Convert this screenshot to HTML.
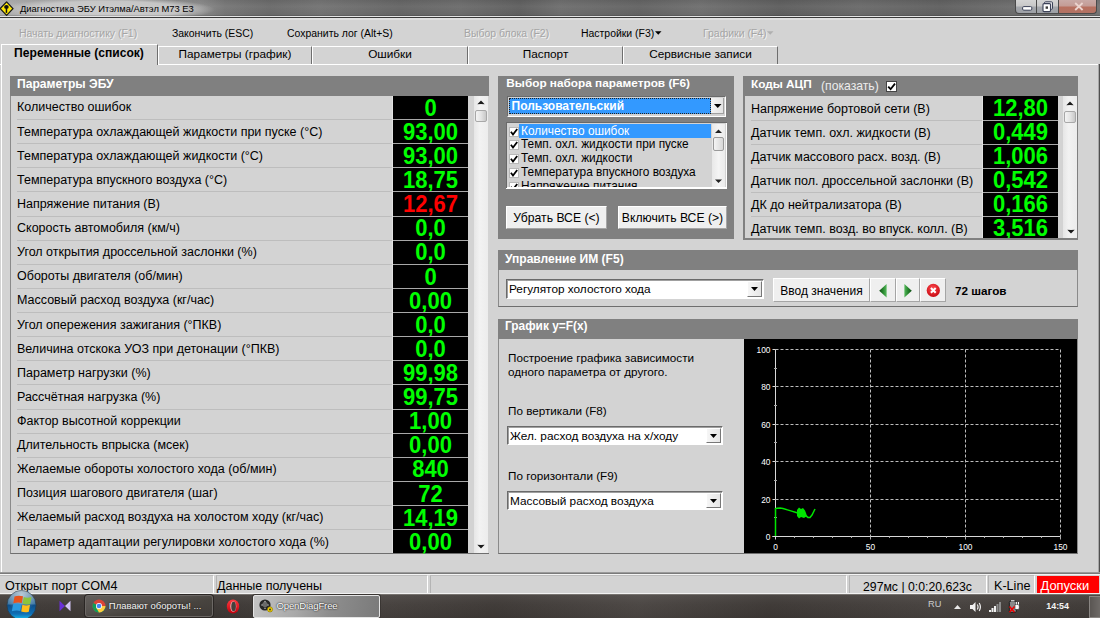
<!DOCTYPE html>
<html><head><meta charset="utf-8">
<style>
*{margin:0;padding:0;box-sizing:border-box}
html,body{width:1100px;height:618px;overflow:hidden;background:#d3d3d3;font-family:"Liberation Sans",sans-serif;color:#000;position:relative}
.a{position:absolute}
.t{position:absolute;white-space:nowrap;line-height:1}
</style></head><body>
<div class="a" style="left:0px;top:0px;width:1100px;height:16px;background:linear-gradient(90deg,#b0b0b0 0px,#8a8a8a 200px,#767676 225px,#6a6a6a 270px,#737373 320px,#656565 400px,#6c6c6c 460px,#5f5f5f 520px,#6e6e6e 560px,#636363 640px,#6f6f6f 700px,#5e5e5e 780px,#6a6a6a 860px,#606060 940px,#6c6c6c 1010px,#747474 1100px)"></div>
<div class="a" style="left:0px;top:0px;width:1100px;height:16px;background:linear-gradient(180deg,rgba(0,0,0,.05),rgba(255,255,255,.04) 40%,rgba(0,0,0,.03))"></div>
<div class="a" style="left:0px;top:0px;width:215px;height:16px;background:radial-gradient(ellipse 50% 75% at 50% 60%,rgba(205,205,205,1) 0%,rgba(200,200,200,.95) 70%,rgba(190,190,190,0) 100%)"></div>
<div class="a" style="left:0px;top:15px;width:1100px;height:1px;background:rgba(0,0,0,.12)"></div>
<div class="a" style="left:0px;top:16px;width:1100px;height:1px;background:#e4e4e4"></div>
<div class="a" style="left:0px;top:17px;width:1100px;height:1px;background:#3a3a3a"></div>
<div class="a" style="left:0px;top:18px;width:1100px;height:2px;background:#e0e0e0"></div>
<svg class="a" style="left:0px;top:1px" width="15" height="16" viewBox="0 0 15 16"><path d="M6.6 0.9 L13 7.6 L6.6 14.4 L0.2 7.6 Z" fill="#ffe800" stroke="#1a1a1a" stroke-width="1.3" stroke-linejoin="round"/><ellipse cx="6.4" cy="5.9" rx="2.3" ry="1.9" fill="#111"/><rect x="5.7" y="6.5" width="1.5" height="5.4" fill="#111"/></svg>
<div class="t" style="left:20px;top:3.84px;font-size:9.4px;color:#000;">Диагностика ЭБУ Итэлма/Автэл М73 Е3</div>
<div class="a" style="left:1015px;top:0;width:22px;height:14px;border:1px solid #4a4a4a;border-top:none;border-radius:0 0 0 4px;background:linear-gradient(#d4d4d4,#c8c8c8 45%,#a4a7ac 55%,#9da0a6)"></div>
<div class="a" style="left:1037px;top:0;width:22px;height:14px;border:1px solid #4a4a4a;border-top:none;border-left:none;background:linear-gradient(#d4d4d4,#c8c8c8 45%,#a4a7ac 55%,#9da0a6)"></div>
<div class="a" style="left:1059px;top:0;width:38px;height:14px;border:1px solid #4a4a4a;border-top:none;border-left:none;border-radius:0 0 4px 0;background:linear-gradient(#c9aaa6,#c49c96 45%,#b8705f 55%,#b27264)"></div>
<svg class="a" style="left:1022px;top:6px" width="11" height="5"><rect x="0.6" y="0.6" width="9.2" height="3.6" rx="1.2" fill="#fff" stroke="#3c4258" stroke-width="1"/></svg>
<svg class="a" style="left:1042px;top:1px" width="12" height="12"><rect x="2.5" y="0.8" width="8" height="7.5" rx="1" fill="#dfe0e4" stroke="#3c4258" stroke-width="1"/><rect x="1" y="2.6" width="7.5" height="8" rx="1" fill="#fff" stroke="#3c4258" stroke-width="1.1"/><rect x="3.6" y="5.4" width="2.4" height="2.4" fill="#3a3a3a"/></svg>
<svg class="a" style="left:1074px;top:2px" width="10" height="9"><path d="M1.2 1 L8.6 8 M8.6 1 L1.2 8" stroke="#ecd4ce" stroke-width="1.8"/></svg>
<div class="t" style="left:19px;top:29.15px;font-size:10.45px;color:#a5a5a5;text-shadow:1px 1px 0 #f2f2f2;">Начать диагностику (F1)</div>
<div class="t" style="left:172px;top:29.15px;font-size:10.45px;color:#000;">Закончить (ESC)</div>
<div class="t" style="left:287px;top:29.15px;font-size:10.45px;color:#000;">Сохранить лог (Alt+S)</div>
<div class="t" style="left:464px;top:29.15px;font-size:10.45px;color:#a5a5a5;text-shadow:1px 1px 0 #f2f2f2;">Выбор блока (F2)</div>
<div class="t" style="left:581px;top:29.15px;font-size:10.45px;color:#000;">Настройки (F3)</div>
<div class="t" style="left:703px;top:29.15px;font-size:10.45px;color:#a5a5a5;text-shadow:1px 1px 0 #f2f2f2;">Графики (F4)</div>
<svg class="a" style="left:655px;top:31px" width="7" height="4"><path d="M0 0.3 L6.5 0.3 L3.25 3.8 Z" fill="#000"/></svg>
<svg class="a" style="left:767px;top:31px" width="7" height="4"><path d="M0 0.3 L6.5 0.3 L3.25 3.8 Z" fill="#b0b0b0"/></svg>
<div class="a" style="left:0px;top:64px;width:1100px;height:1px;background:#fff"></div>
<div class="a" style="left:1px;top:44px;width:157px;height:21px;background:#d3d3d3;border-top:1px solid #fff;border-left:1px solid #fff;border-right:1px solid #6e6e6e"></div>
<div class="t" style="left:-121px;width:400px;text-align:center;top:46.66px;font-size:12.1px;font-weight:bold;color:#000;">Переменные (список)</div>
<div class="a" style="left:158px;top:46px;width:154px;height:18px;border-top:1px solid #fff;border-left:1px solid #fff;border-right:1px solid #6e6e6e"></div>
<div class="t" style="left:35.0px;width:400px;text-align:center;top:49.01px;font-size:11.8px;color:#000;">Параметры (график)</div>
<div class="a" style="left:312px;top:46px;width:156px;height:18px;border-top:1px solid #fff;border-left:1px solid #fff;border-right:1px solid #6e6e6e"></div>
<div class="t" style="left:190.0px;width:400px;text-align:center;top:49.01px;font-size:11.8px;color:#000;">Ошибки</div>
<div class="a" style="left:468px;top:46px;width:155px;height:18px;border-top:1px solid #fff;border-left:1px solid #fff;border-right:1px solid #6e6e6e"></div>
<div class="t" style="left:345.5px;width:400px;text-align:center;top:49.01px;font-size:11.8px;color:#000;">Паспорт</div>
<div class="a" style="left:623px;top:46px;width:155px;height:18px;border-top:1px solid #fff;border-left:1px solid #fff;border-right:1px solid #6e6e6e"></div>
<div class="t" style="left:500.5px;width:400px;text-align:center;top:49.01px;font-size:11.8px;color:#000;">Сервисные записи</div>
<div class="a" style="left:10px;top:76px;width:479px;height:478px;background:#d3d3d3;border-left:1px solid #8a8a8a;border-bottom:1px solid #6e6e6e"></div>
<div class="a" style="left:10px;top:76px;width:479px;height:20px;background:#808080"></div>
<div class="t" style="left:17px;top:78.16px;font-size:12.1px;font-weight:bold;color:#fff;">Параметры ЭБУ</div>
<div class="t" style="left:17px;top:101.42px;font-size:12.5px;color:#000;">Количество ошибок</div>
<div class="a" style="left:393px;top:96px;width:75px;height:23px;background:#000"></div>
<div class="t" style="left:230.5px;width:400px;text-align:center;top:96.69px;font-size:22px;font-weight:bold;color:#00ff00;transform:scaleY(1.08);transform-origin:0 0">0</div>
<div class="a" style="left:17px;top:119px;width:376px;height:1px;background:#bdbdbd"></div>
<div class="a" style="left:393px;top:119px;width:75px;height:1px;background:#a8a8a8"></div>
<div class="t" style="left:17px;top:125.54px;font-size:12.5px;color:#000;">Температура охлаждающей жидкости при пуске (°C)</div>
<div class="a" style="left:393px;top:120px;width:75px;height:23px;background:#000"></div>
<div class="t" style="left:230.5px;width:400px;text-align:center;top:120.81px;font-size:22px;font-weight:bold;color:#00ff00;transform:scaleY(1.08);transform-origin:0 0">93,00</div>
<div class="a" style="left:17px;top:143px;width:376px;height:1px;background:#bdbdbd"></div>
<div class="a" style="left:393px;top:143px;width:75px;height:1px;background:#a8a8a8"></div>
<div class="t" style="left:17px;top:149.66px;font-size:12.5px;color:#000;">Температура охлаждающей жидкости (°C)</div>
<div class="a" style="left:393px;top:144px;width:75px;height:23px;background:#000"></div>
<div class="t" style="left:230.5px;width:400px;text-align:center;top:144.93px;font-size:22px;font-weight:bold;color:#00ff00;transform:scaleY(1.08);transform-origin:0 0">93,00</div>
<div class="a" style="left:17px;top:167px;width:376px;height:1px;background:#bdbdbd"></div>
<div class="a" style="left:393px;top:167px;width:75px;height:1px;background:#a8a8a8"></div>
<div class="t" style="left:17px;top:173.78px;font-size:12.5px;color:#000;">Температура впускного воздуха (°C)</div>
<div class="a" style="left:393px;top:168px;width:75px;height:23px;background:#000"></div>
<div class="t" style="left:230.5px;width:400px;text-align:center;top:169.05px;font-size:22px;font-weight:bold;color:#00ff00;transform:scaleY(1.08);transform-origin:0 0">18,75</div>
<div class="a" style="left:17px;top:191px;width:376px;height:1px;background:#bdbdbd"></div>
<div class="a" style="left:393px;top:191px;width:75px;height:1px;background:#a8a8a8"></div>
<div class="t" style="left:17px;top:197.90px;font-size:12.5px;color:#000;">Напряжение питания (В)</div>
<div class="a" style="left:393px;top:192px;width:75px;height:24px;background:#000"></div>
<div class="t" style="left:230.5px;width:400px;text-align:center;top:193.17px;font-size:22px;font-weight:bold;color:#ff0000;transform:scaleY(1.08);transform-origin:0 0">12,67</div>
<div class="a" style="left:17px;top:216px;width:376px;height:1px;background:#bdbdbd"></div>
<div class="a" style="left:393px;top:216px;width:75px;height:1px;background:#a8a8a8"></div>
<div class="t" style="left:17px;top:222.02px;font-size:12.5px;color:#000;">Скорость автомобиля (км/ч)</div>
<div class="a" style="left:393px;top:217px;width:75px;height:23px;background:#000"></div>
<div class="t" style="left:230.5px;width:400px;text-align:center;top:217.29px;font-size:22px;font-weight:bold;color:#00ff00;transform:scaleY(1.08);transform-origin:0 0">0,0</div>
<div class="a" style="left:17px;top:240px;width:376px;height:1px;background:#bdbdbd"></div>
<div class="a" style="left:393px;top:240px;width:75px;height:1px;background:#a8a8a8"></div>
<div class="t" style="left:17px;top:246.14px;font-size:12.5px;color:#000;">Угол открытия дроссельной заслонки (%)</div>
<div class="a" style="left:393px;top:241px;width:75px;height:23px;background:#000"></div>
<div class="t" style="left:230.5px;width:400px;text-align:center;top:241.41px;font-size:22px;font-weight:bold;color:#00ff00;transform:scaleY(1.08);transform-origin:0 0">0,0</div>
<div class="a" style="left:17px;top:264px;width:376px;height:1px;background:#bdbdbd"></div>
<div class="a" style="left:393px;top:264px;width:75px;height:1px;background:#a8a8a8"></div>
<div class="t" style="left:17px;top:270.26px;font-size:12.5px;color:#000;">Обороты двигателя (об/мин)</div>
<div class="a" style="left:393px;top:265px;width:75px;height:23px;background:#000"></div>
<div class="t" style="left:230.5px;width:400px;text-align:center;top:265.53px;font-size:22px;font-weight:bold;color:#00ff00;transform:scaleY(1.08);transform-origin:0 0">0</div>
<div class="a" style="left:17px;top:288px;width:376px;height:1px;background:#bdbdbd"></div>
<div class="a" style="left:393px;top:288px;width:75px;height:1px;background:#a8a8a8"></div>
<div class="t" style="left:17px;top:294.38px;font-size:12.5px;color:#000;">Массовый расход воздуха (кг/час)</div>
<div class="a" style="left:393px;top:289px;width:75px;height:23px;background:#000"></div>
<div class="t" style="left:230.5px;width:400px;text-align:center;top:289.65px;font-size:22px;font-weight:bold;color:#00ff00;transform:scaleY(1.08);transform-origin:0 0">0,00</div>
<div class="a" style="left:17px;top:312px;width:376px;height:1px;background:#bdbdbd"></div>
<div class="a" style="left:393px;top:312px;width:75px;height:1px;background:#a8a8a8"></div>
<div class="t" style="left:17px;top:318.50px;font-size:12.5px;color:#000;">Угол опережения зажигания (°ПКВ)</div>
<div class="a" style="left:393px;top:313px;width:75px;height:23px;background:#000"></div>
<div class="t" style="left:230.5px;width:400px;text-align:center;top:313.77px;font-size:22px;font-weight:bold;color:#00ff00;transform:scaleY(1.08);transform-origin:0 0">0,0</div>
<div class="a" style="left:17px;top:336px;width:376px;height:1px;background:#bdbdbd"></div>
<div class="a" style="left:393px;top:336px;width:75px;height:1px;background:#a8a8a8"></div>
<div class="t" style="left:17px;top:342.62px;font-size:12.5px;color:#000;">Величина отскока УОЗ при детонации (°ПКВ)</div>
<div class="a" style="left:393px;top:337px;width:75px;height:23px;background:#000"></div>
<div class="t" style="left:230.5px;width:400px;text-align:center;top:337.89px;font-size:22px;font-weight:bold;color:#00ff00;transform:scaleY(1.08);transform-origin:0 0">0,0</div>
<div class="a" style="left:17px;top:360px;width:376px;height:1px;background:#bdbdbd"></div>
<div class="a" style="left:393px;top:360px;width:75px;height:1px;background:#a8a8a8"></div>
<div class="t" style="left:17px;top:366.74px;font-size:12.5px;color:#000;">Параметр нагрузки (%)</div>
<div class="a" style="left:393px;top:361px;width:75px;height:23px;background:#000"></div>
<div class="t" style="left:230.5px;width:400px;text-align:center;top:362.01px;font-size:22px;font-weight:bold;color:#00ff00;transform:scaleY(1.08);transform-origin:0 0">99,98</div>
<div class="a" style="left:17px;top:384px;width:376px;height:1px;background:#bdbdbd"></div>
<div class="a" style="left:393px;top:384px;width:75px;height:1px;background:#a8a8a8"></div>
<div class="t" style="left:17px;top:390.86px;font-size:12.5px;color:#000;">Рассчётная нагрузка (%)</div>
<div class="a" style="left:393px;top:385px;width:75px;height:24px;background:#000"></div>
<div class="t" style="left:230.5px;width:400px;text-align:center;top:386.13px;font-size:22px;font-weight:bold;color:#00ff00;transform:scaleY(1.08);transform-origin:0 0">99,75</div>
<div class="a" style="left:17px;top:409px;width:376px;height:1px;background:#bdbdbd"></div>
<div class="a" style="left:393px;top:409px;width:75px;height:1px;background:#a8a8a8"></div>
<div class="t" style="left:17px;top:414.98px;font-size:12.5px;color:#000;">Фактор высотной коррекции</div>
<div class="a" style="left:393px;top:410px;width:75px;height:23px;background:#000"></div>
<div class="t" style="left:230.5px;width:400px;text-align:center;top:410.25px;font-size:22px;font-weight:bold;color:#00ff00;transform:scaleY(1.08);transform-origin:0 0">1,00</div>
<div class="a" style="left:17px;top:433px;width:376px;height:1px;background:#bdbdbd"></div>
<div class="a" style="left:393px;top:433px;width:75px;height:1px;background:#a8a8a8"></div>
<div class="t" style="left:17px;top:439.10px;font-size:12.5px;color:#000;">Длительность впрыска (мсек)</div>
<div class="a" style="left:393px;top:434px;width:75px;height:23px;background:#000"></div>
<div class="t" style="left:230.5px;width:400px;text-align:center;top:434.37px;font-size:22px;font-weight:bold;color:#00ff00;transform:scaleY(1.08);transform-origin:0 0">0,00</div>
<div class="a" style="left:17px;top:457px;width:376px;height:1px;background:#bdbdbd"></div>
<div class="a" style="left:393px;top:457px;width:75px;height:1px;background:#a8a8a8"></div>
<div class="t" style="left:17px;top:463.22px;font-size:12.5px;color:#000;">Желаемые обороты холостого хода (об/мин)</div>
<div class="a" style="left:393px;top:458px;width:75px;height:23px;background:#000"></div>
<div class="t" style="left:230.5px;width:400px;text-align:center;top:458.49px;font-size:22px;font-weight:bold;color:#00ff00;transform:scaleY(1.08);transform-origin:0 0">840</div>
<div class="a" style="left:17px;top:481px;width:376px;height:1px;background:#bdbdbd"></div>
<div class="a" style="left:393px;top:481px;width:75px;height:1px;background:#a8a8a8"></div>
<div class="t" style="left:17px;top:487.34px;font-size:12.5px;color:#000;">Позиция шагового двигателя (шаг)</div>
<div class="a" style="left:393px;top:482px;width:75px;height:23px;background:#000"></div>
<div class="t" style="left:230.5px;width:400px;text-align:center;top:482.61px;font-size:22px;font-weight:bold;color:#00ff00;transform:scaleY(1.08);transform-origin:0 0">72</div>
<div class="a" style="left:17px;top:505px;width:376px;height:1px;background:#bdbdbd"></div>
<div class="a" style="left:393px;top:505px;width:75px;height:1px;background:#a8a8a8"></div>
<div class="t" style="left:17px;top:511.46px;font-size:12.5px;color:#000;">Желаемый расход воздуха на холостом ходу (кг/час)</div>
<div class="a" style="left:393px;top:506px;width:75px;height:23px;background:#000"></div>
<div class="t" style="left:230.5px;width:400px;text-align:center;top:506.73px;font-size:22px;font-weight:bold;color:#00ff00;transform:scaleY(1.08);transform-origin:0 0">14,19</div>
<div class="a" style="left:17px;top:529px;width:376px;height:1px;background:#bdbdbd"></div>
<div class="a" style="left:393px;top:529px;width:75px;height:1px;background:#a8a8a8"></div>
<div class="t" style="left:17px;top:535.58px;font-size:12.5px;color:#000;">Параметр адаптации регулировки холостого хода (%)</div>
<div class="a" style="left:393px;top:530px;width:75px;height:23px;background:#000"></div>
<div class="t" style="left:230.5px;width:400px;text-align:center;top:530.85px;font-size:22px;font-weight:bold;color:#00ff00;transform:scaleY(1.08);transform-origin:0 0">0,00</div>
<div class="a" style="left:392px;top:96px;width:1px;height:457px;background:#e2e2e2"></div>
<div class="a" style="left:474px;top:96px;width:14px;height:457px;background:linear-gradient(90deg,#e6e6e6,#f2f2f2 40%,#ececec)"></div>
<svg class="a" style="left:477px;top:100px" width="8" height="5"><path d="M0.3 4.2 L4 0.6 L7.7 4.2 L4 3.9 Z" fill="#1a1a1a"/></svg>
<div class="a" style="left:475px;top:110px;width:12px;height:12px;background:linear-gradient(90deg,#f4f4f4,#e4e4e4 50%,#c8c8c8);border:1px solid #a8a8a8;border-radius:2px"></div>
<svg class="a" style="left:477px;top:544px" width="8" height="5"><path d="M0.3 0.8 L4 4.4 L7.7 0.8 L4 1.1 Z" fill="#1a1a1a"/></svg>
<div class="a" style="left:498px;top:76px;width:236px;height:163px;background:#808080"></div>
<div class="t" style="left:506.3px;top:78.01px;font-size:11.8px;font-weight:bold;color:#fff;">Выбор набора параметров (F6)</div>
<div class="a" style="left:507px;top:96px;width:219px;height:21px;background:#fff;border-top:1px solid #6a6a6a;border-left:1px solid #6a6a6a;border-bottom:1px solid #fff;border-right:1px solid #fff"></div>
<div class="a" style="left:508px;top:97px;width:217px;height:19px;background:#d3d3d3"></div>
<div class="a" style="left:509px;top:98px;width:202px;height:16px;background:#3399ff;outline:1px dotted #222;outline-offset:-1px"></div>
<div class="t" style="left:511.5px;top:100.34px;font-size:12px;font-weight:bold;color:#fff;">Пользовательский</div>
<div class="a" style="left:711px;top:98px;width:13px;height:16px;background:linear-gradient(90deg,#f4f4f4,#e4e4e4);border-right:1px solid #a0a0a0;border-bottom:1px solid #a0a0a0"></div>
<svg class="a" style="left:714px;top:104px" width="8" height="4"><path d="M0 0 L7.5 0 L3.75 4 Z" fill="#000"/></svg>
<div class="a" style="left:506px;top:122px;width:221px;height:67px;background:#fff;border-top:1px solid #6a6a6a;border-left:1px solid #6a6a6a"></div>
<div class="a" style="left:507px;top:123px;width:219px;height:64px;background:#d3d3d3;overflow:hidden"></div>
<div class="a" style="left:507px;top:123px;width:205px;height:64px;overflow:hidden">
<div class="a" style="left:12px;top:1px;width:192px;height:14px;background:#3399ff"></div>
<div class="a" style="left:2px;top:3.6px;width:10px;height:10px;background:#fff;border:1px solid #b8b8b8"></div>
<svg class="a" style="left:3px;top:4.6px" width="8" height="8"><path d="M0.9 3.8 L3 6.5 L7.2 1" fill="none" stroke="#000" stroke-width="1.8"/></svg>
<div class="t" style="left:14px;top:2.6px;font-size:11.85px;color:#fff">Количество ошибок</div>
<div class="a" style="left:2px;top:17.4px;width:10px;height:10px;background:#fff;border:1px solid #b8b8b8"></div>
<svg class="a" style="left:3px;top:18.4px" width="8" height="8"><path d="M0.9 3.8 L3 6.5 L7.2 1" fill="none" stroke="#000" stroke-width="1.8"/></svg>
<div class="t" style="left:14px;top:16.4px;font-size:11.85px;color:#000">Темп. охл. жидкости при пуске</div>
<div class="a" style="left:2px;top:31.1px;width:10px;height:10px;background:#fff;border:1px solid #b8b8b8"></div>
<svg class="a" style="left:3px;top:32.1px" width="8" height="8"><path d="M0.9 3.8 L3 6.5 L7.2 1" fill="none" stroke="#000" stroke-width="1.8"/></svg>
<div class="t" style="left:14px;top:30.1px;font-size:11.85px;color:#000">Темп. охл. жидкости</div>
<div class="a" style="left:2px;top:44.8px;width:10px;height:10px;background:#fff;border:1px solid #b8b8b8"></div>
<svg class="a" style="left:3px;top:45.8px" width="8" height="8"><path d="M0.9 3.8 L3 6.5 L7.2 1" fill="none" stroke="#000" stroke-width="1.8"/></svg>
<div class="t" style="left:14px;top:43.8px;font-size:11.85px;color:#000">Температура впускного воздуха</div>
<div class="a" style="left:2px;top:58.6px;width:10px;height:10px;background:#fff;border:1px solid #b8b8b8"></div>
<svg class="a" style="left:3px;top:59.6px" width="8" height="8"><path d="M0.9 3.8 L3 6.5 L7.2 1" fill="none" stroke="#000" stroke-width="1.8"/></svg>
<div class="t" style="left:14px;top:57.6px;font-size:11.85px;color:#000">Напряжение питания</div>
</div>
<div class="a" style="left:712px;top:124px;width:13px;height:63px;background:linear-gradient(90deg,#e8e8e8,#f4f4f4 50%,#ececec)"></div>
<svg class="a" style="left:715px;top:129px" width="7" height="4"><path d="M0 4 L3.5 0.5 L7 4 Z" fill="#222"/></svg>
<div class="a" style="left:713px;top:137px;width:11px;height:14px;background:linear-gradient(90deg,#f4f4f4,#d8d8d8);border:1px solid #9a9a9a;border-radius:2px"></div>
<svg class="a" style="left:715px;top:179px" width="7" height="4"><path d="M0 0.5 L3.5 4 L7 0.5 Z" fill="#222"/></svg>
<div class="a" style="left:506px;top:188px;width:221px;height:1px;background:#fff"></div>
<div class="a" style="left:506px;top:206px;width:101px;height:23px;background:#efefef;border-top:1px solid #fff;border-left:1px solid #fff;border-right:1px solid #a5a5a5;border-bottom:1px solid #a5a5a5"></div>
<div class="t" style="left:356.5px;width:400px;text-align:center;top:212.27px;font-size:12.2px;color:#000;">Убрать ВСЕ (&lt;)</div>
<div class="a" style="left:618px;top:206px;width:109px;height:23px;background:#efefef;border-top:1px solid #fff;border-left:1px solid #fff;border-right:1px solid #a5a5a5;border-bottom:1px solid #a5a5a5"></div>
<div class="t" style="left:472.5px;width:400px;text-align:center;top:212.27px;font-size:12.2px;color:#000;">Включить ВСЕ (&gt;)</div>
<div class="a" style="left:743px;top:76px;width:335px;height:164px;background:#808080"></div>
<div class="a" style="left:745px;top:96px;width:332px;height:142px;background:#d3d3d3"></div>
<div class="a" style="left:743px;top:76px;width:335px;height:20px;background:#808080"></div>
<div class="t" style="left:751px;top:78.91px;font-size:11.8px;font-weight:bold;color:#fff;">Коды АЦП</div>
<div class="t" style="left:821px;top:79.67px;font-size:12.2px;color:#ececec;">(показать)</div>
<div class="a" style="left:886px;top:81px;width:11px;height:11px;background:#fff;border:1px solid #444"></div>
<svg class="a" style="left:887px;top:82px" width="9" height="9"><path d="M1.2 4.6 L3.6 7.2 L8 1.6" fill="none" stroke="#000" stroke-width="1.8"/></svg>
<div class="a" style="left:744px;top:96px;width:333px;height:142px;overflow:hidden">
<div class="t" style="left:7px;top:6.62px;font-size:12.5px">Напряжение бортовой сети (В)</div>
<div class="a" style="left:239px;top:0px;width:75px;height:24px;background:#000"></div>
<div class="t" style="left:176.5px;width:200px;text-align:center;top:1.09px;font-size:22px;font-weight:bold;color:#00ff00;transform:scaleY(1.08);transform-origin:0 0">12,80</div>
<div class="a" style="left:7px;top:24px;width:232px;height:1px;background:#bdbdbd"></div>
<div class="a" style="left:239px;top:24px;width:75px;height:1px;background:#a8a8a8"></div>
<div class="t" style="left:7px;top:30.62px;font-size:12.5px">Датчик темп. охл. жидкости (В)</div>
<div class="a" style="left:239px;top:25px;width:75px;height:23px;background:#000"></div>
<div class="t" style="left:176.5px;width:200px;text-align:center;top:25.09px;font-size:22px;font-weight:bold;color:#00ff00;transform:scaleY(1.08);transform-origin:0 0">0,449</div>
<div class="a" style="left:7px;top:48px;width:232px;height:1px;background:#bdbdbd"></div>
<div class="a" style="left:239px;top:48px;width:75px;height:1px;background:#a8a8a8"></div>
<div class="t" style="left:7px;top:54.62px;font-size:12.5px">Датчик массового расх. возд. (В)</div>
<div class="a" style="left:239px;top:49px;width:75px;height:23px;background:#000"></div>
<div class="t" style="left:176.5px;width:200px;text-align:center;top:49.09px;font-size:22px;font-weight:bold;color:#00ff00;transform:scaleY(1.08);transform-origin:0 0">1,006</div>
<div class="a" style="left:7px;top:72px;width:232px;height:1px;background:#bdbdbd"></div>
<div class="a" style="left:239px;top:72px;width:75px;height:1px;background:#a8a8a8"></div>
<div class="t" style="left:7px;top:78.62px;font-size:12.5px">Датчик пол. дроссельной заслонки (В)</div>
<div class="a" style="left:239px;top:73px;width:75px;height:23px;background:#000"></div>
<div class="t" style="left:176.5px;width:200px;text-align:center;top:73.09px;font-size:22px;font-weight:bold;color:#00ff00;transform:scaleY(1.08);transform-origin:0 0">0,542</div>
<div class="a" style="left:7px;top:96px;width:232px;height:1px;background:#bdbdbd"></div>
<div class="a" style="left:239px;top:96px;width:75px;height:1px;background:#a8a8a8"></div>
<div class="t" style="left:7px;top:102.62px;font-size:12.5px">ДК до нейтрализатора (В)</div>
<div class="a" style="left:239px;top:97px;width:75px;height:23px;background:#000"></div>
<div class="t" style="left:176.5px;width:200px;text-align:center;top:97.09px;font-size:22px;font-weight:bold;color:#00ff00;transform:scaleY(1.08);transform-origin:0 0">0,166</div>
<div class="a" style="left:7px;top:120px;width:232px;height:1px;background:#bdbdbd"></div>
<div class="a" style="left:239px;top:120px;width:75px;height:1px;background:#a8a8a8"></div>
<div class="t" style="left:7px;top:126.62px;font-size:12.5px">Датчик темп. возд. во впуск. колл. (В)</div>
<div class="a" style="left:239px;top:121px;width:75px;height:23px;background:#000"></div>
<div class="t" style="left:176.5px;width:200px;text-align:center;top:121.09px;font-size:22px;font-weight:bold;color:#00ff00;transform:scaleY(1.08);transform-origin:0 0">3,516</div>
<div class="a" style="left:7px;top:144px;width:232px;height:1px;background:#bdbdbd"></div>
<div class="a" style="left:239px;top:144px;width:75px;height:1px;background:#a8a8a8"></div>
<div class="a" style="left:238px;top:0;width:1px;height:143px;background:#e2e2e2"></div>
</div>
<div class="a" style="left:1063px;top:96px;width:14px;height:142px;background:linear-gradient(90deg,#e6e6e6,#f2f2f2 40%,#ececec)"></div>
<svg class="a" style="left:1066px;top:101px" width="8" height="5"><path d="M0.3 4.2 L4 0.6 L7.7 4.2 L4 3.9 Z" fill="#1a1a1a"/></svg>
<div class="a" style="left:1064px;top:111px;width:12px;height:12px;background:linear-gradient(90deg,#f4f4f4,#e4e4e4 50%,#c8c8c8);border:1px solid #a8a8a8;border-radius:2px"></div>
<svg class="a" style="left:1067px;top:229px" width="8" height="5"><path d="M0.3 0.8 L4 4.4 L7.7 0.8 L4 1.1 Z" fill="#1a1a1a"/></svg>
<div class="a" style="left:498px;top:250px;width:580px;height:57px;background:#d3d3d3;border-left:1px solid #8a8a8a;border-bottom:1px solid #6e6e6e;border-right:1px solid #8a8a8a"></div>
<div class="a" style="left:498px;top:250px;width:580px;height:20px;background:#808080"></div>
<div class="t" style="left:505px;top:252.50px;font-size:12.05px;font-weight:bold;color:#fff;">Управление ИМ (F5)</div>
<div class="a" style="left:506px;top:279px;width:258px;height:20px;background:#fff;border-top:1px solid #6a6a6a;border-left:1px solid #6a6a6a;border-bottom:1px solid #fff;border-right:1px solid #fff"></div>
<div class="a" style="left:507px;top:280px;width:256px;height:18px;border-top:1px solid #a0a0a0;border-left:1px solid #a0a0a0;background:#fff"></div>
<div class="a" style="left:747px;top:281px;width:15px;height:16px;background:linear-gradient(90deg,#f6f6f6,#e6e6e6);border-top:1px solid #fff;border-left:1px solid #fff;border-right:1px solid #777;border-bottom:1px solid #777"></div>
<svg class="a" style="left:751px;top:287.0px" width="8" height="4"><path d="M0 0 L7 0 L3.5 4 Z" fill="#000"/></svg>
<div class="t" style="left:509px;top:283.51px;font-size:11.8px;color:#000;">Регулятор холостого хода</div>
<div class="a" style="left:773px;top:278px;width:97px;height:24px;background:#efefef;border-top:1px solid #fff;border-left:1px solid #fff;border-right:1px solid #a5a5a5;border-bottom:1px solid #a5a5a5"></div>
<div class="t" style="left:621.5px;width:400px;text-align:center;top:284.84px;font-size:12px;color:#000;">Ввод значения</div>
<div class="a" style="left:870px;top:278px;width:26px;height:24px;background:#efefef;border-top:1px solid #fff;border-left:1px solid #fff;border-right:1px solid #a5a5a5;border-bottom:1px solid #a5a5a5"></div>
<div class="a" style="left:896px;top:278px;width:24px;height:24px;background:#efefef;border-top:1px solid #fff;border-left:1px solid #fff;border-right:1px solid #a5a5a5;border-bottom:1px solid #a5a5a5"></div>
<div class="a" style="left:920px;top:278px;width:26px;height:24px;background:#efefef;border-top:1px solid #fff;border-left:1px solid #fff;border-right:1px solid #a5a5a5;border-bottom:1px solid #a5a5a5"></div>
<svg class="a" style="left:878px;top:283px" width="10" height="16"><defs><linearGradient id="al" x1="0" y1="0" x2="1" y2="0"><stop offset="0" stop-color="#0f4a14"/><stop offset=".55" stop-color="#2a8a30"/><stop offset="1" stop-color="#56b85c"/></linearGradient></defs><path d="M8.6 1 L1.2 7.8 L8.6 14.6 Z" fill="url(#al)"/></svg>
<svg class="a" style="left:903px;top:283px" width="10" height="16"><defs><linearGradient id="ar" x1="1" y1="0" x2="0" y2="0"><stop offset="0" stop-color="#0f4a14"/><stop offset=".55" stop-color="#2a8a30"/><stop offset="1" stop-color="#56b85c"/></linearGradient></defs><path d="M1.4 1 L8.8 7.8 L1.4 14.6 Z" fill="url(#ar)"/></svg>
<svg class="a" style="left:925px;top:282px" width="16" height="17"><defs><radialGradient id="cg" cx="45%" cy="35%" r="65%"><stop offset="0" stop-color="#ff4a50"/><stop offset="1" stop-color="#c80a12"/></radialGradient></defs><circle cx="8.3" cy="8.4" r="6.6" fill="url(#cg)"/><path d="M5.9 6 L10.7 10.8 M10.7 6 L5.9 10.8" stroke="#fff" stroke-width="2"/></svg>
<div class="t" style="left:955px;top:285.10px;font-size:11.7px;font-weight:bold;color:#000;">72 шагов</div>
<div class="a" style="left:498px;top:319px;width:580px;height:235px;background:#d3d3d3;border-left:1px solid #8a8a8a;border-bottom:1px solid #6e6e6e;border-right:1px solid #8a8a8a"></div>
<div class="a" style="left:498px;top:319px;width:580px;height:20px;background:#808080"></div>
<div class="t" style="left:505px;top:321.43px;font-size:11.9px;font-weight:bold;color:#fff;">График y=F(x)</div>
<div class="t" style="left:508px;top:351.60px;font-size:11.7px;color:#000;">Построение графика зависимости</div>
<div class="t" style="left:508px;top:365.60px;font-size:11.7px;color:#000;">одного параметра от другого.</div>
<div class="t" style="left:508px;top:405.10px;font-size:11.7px;color:#000;">По вертикали (F8)</div>
<div class="a" style="left:507px;top:426px;width:216px;height:19px;background:#fff;border-top:1px solid #6a6a6a;border-left:1px solid #6a6a6a;border-bottom:1px solid #fff;border-right:1px solid #fff"></div>
<div class="a" style="left:508px;top:427px;width:214px;height:17px;border-top:1px solid #a0a0a0;border-left:1px solid #a0a0a0;background:#fff"></div>
<div class="a" style="left:706px;top:428px;width:15px;height:15px;background:linear-gradient(90deg,#f6f6f6,#e6e6e6);border-top:1px solid #fff;border-left:1px solid #fff;border-right:1px solid #777;border-bottom:1px solid #777"></div>
<svg class="a" style="left:710px;top:433.5px" width="8" height="4"><path d="M0 0 L7 0 L3.5 4 Z" fill="#000"/></svg>
<div class="t" style="left:510px;top:430.81px;font-size:11.8px;color:#000;">Жел. расход воздуха на х/ходу</div>
<div class="t" style="left:508px;top:470.10px;font-size:11.7px;color:#000;">По горизонтали (F9)</div>
<div class="a" style="left:507px;top:491px;width:216px;height:19px;background:#fff;border-top:1px solid #6a6a6a;border-left:1px solid #6a6a6a;border-bottom:1px solid #fff;border-right:1px solid #fff"></div>
<div class="a" style="left:508px;top:492px;width:214px;height:17px;border-top:1px solid #a0a0a0;border-left:1px solid #a0a0a0;background:#fff"></div>
<div class="a" style="left:706px;top:493px;width:15px;height:15px;background:linear-gradient(90deg,#f6f6f6,#e6e6e6);border-top:1px solid #fff;border-left:1px solid #fff;border-right:1px solid #777;border-bottom:1px solid #777"></div>
<svg class="a" style="left:710px;top:498.5px" width="8" height="4"><path d="M0 0 L7 0 L3.5 4 Z" fill="#000"/></svg>
<div class="t" style="left:510px;top:495.81px;font-size:11.8px;color:#000;">Массовый расход воздуха</div>
<div class="a" style="left:744px;top:339px;width:333px;height:214px;background:#000"></div>
<svg class="a" style="left:744px;top:339px" width="333" height="214" viewBox="744 339 333 214"><line x1="775.5" y1="499.5" x2="1060.5" y2="499.5" stroke="#bdbdbd" stroke-width="1" stroke-dasharray="3,2"/><line x1="775.5" y1="461.5" x2="1060.5" y2="461.5" stroke="#bdbdbd" stroke-width="1" stroke-dasharray="3,2"/><line x1="775.5" y1="424.5" x2="1060.5" y2="424.5" stroke="#bdbdbd" stroke-width="1" stroke-dasharray="3,2"/><line x1="775.5" y1="386.5" x2="1060.5" y2="386.5" stroke="#bdbdbd" stroke-width="1" stroke-dasharray="3,2"/><line x1="775.5" y1="349.5" x2="1060.5" y2="349.5" stroke="#bdbdbd" stroke-width="1" stroke-dasharray="3,2"/><line x1="870.5" y1="349.5" x2="870.5" y2="536.5" stroke="#bdbdbd" stroke-width="1" stroke-dasharray="3,2"/><line x1="965.5" y1="349.5" x2="965.5" y2="536.5" stroke="#bdbdbd" stroke-width="1" stroke-dasharray="3,2"/><line x1="1060.5" y1="349.5" x2="1060.5" y2="536.5" stroke="#bdbdbd" stroke-width="1" stroke-dasharray="3,2"/><line x1="775.5" y1="349.5" x2="775.5" y2="539.5" stroke="#d8d8d8" stroke-width="1"/><line x1="772.5" y1="536.5" x2="1060.5" y2="536.5" stroke="#d8d8d8" stroke-width="1"/><line x1="794.5" y1="536.5" x2="794.5" y2="538.0" stroke="#a8a8a8" stroke-width="1"/><line x1="813.5" y1="536.5" x2="813.5" y2="538.0" stroke="#a8a8a8" stroke-width="1"/><line x1="832.5" y1="536.5" x2="832.5" y2="538.0" stroke="#a8a8a8" stroke-width="1"/><line x1="851.5" y1="536.5" x2="851.5" y2="538.0" stroke="#a8a8a8" stroke-width="1"/><line x1="870.5" y1="536.5" x2="870.5" y2="539.5" stroke="#a8a8a8" stroke-width="1"/><line x1="889.5" y1="536.5" x2="889.5" y2="538.0" stroke="#a8a8a8" stroke-width="1"/><line x1="908.5" y1="536.5" x2="908.5" y2="538.0" stroke="#a8a8a8" stroke-width="1"/><line x1="927.5" y1="536.5" x2="927.5" y2="538.0" stroke="#a8a8a8" stroke-width="1"/><line x1="946.5" y1="536.5" x2="946.5" y2="538.0" stroke="#a8a8a8" stroke-width="1"/><line x1="965.5" y1="536.5" x2="965.5" y2="539.5" stroke="#a8a8a8" stroke-width="1"/><line x1="984.5" y1="536.5" x2="984.5" y2="538.0" stroke="#a8a8a8" stroke-width="1"/><line x1="1003.5" y1="536.5" x2="1003.5" y2="538.0" stroke="#a8a8a8" stroke-width="1"/><line x1="1022.5" y1="536.5" x2="1022.5" y2="538.0" stroke="#a8a8a8" stroke-width="1"/><line x1="1041.5" y1="536.5" x2="1041.5" y2="538.0" stroke="#a8a8a8" stroke-width="1"/><line x1="1060.5" y1="536.5" x2="1060.5" y2="539.5" stroke="#a8a8a8" stroke-width="1"/><line x1="774.0" y1="517.5" x2="777.0" y2="517.5" stroke="#a8a8a8" stroke-width="1"/><line x1="774.0" y1="499.5" x2="777.0" y2="499.5" stroke="#a8a8a8" stroke-width="1"/><line x1="774.0" y1="480.5" x2="777.0" y2="480.5" stroke="#a8a8a8" stroke-width="1"/><line x1="774.0" y1="461.5" x2="777.0" y2="461.5" stroke="#a8a8a8" stroke-width="1"/><line x1="774.0" y1="442.5" x2="777.0" y2="442.5" stroke="#a8a8a8" stroke-width="1"/><line x1="774.0" y1="424.5" x2="777.0" y2="424.5" stroke="#a8a8a8" stroke-width="1"/><line x1="774.0" y1="405.5" x2="777.0" y2="405.5" stroke="#a8a8a8" stroke-width="1"/><line x1="774.0" y1="386.5" x2="777.0" y2="386.5" stroke="#a8a8a8" stroke-width="1"/><line x1="774.0" y1="368.5" x2="777.0" y2="368.5" stroke="#a8a8a8" stroke-width="1"/><line x1="772.5" y1="536.5" x2="775.5" y2="536.5" stroke="#d8d8d8" stroke-width="1"/><text x="770.5" y="539.5" fill="#fff" font-size="8.4" text-anchor="end" font-family="Liberation Sans">0</text><line x1="772.5" y1="499.5" x2="775.5" y2="499.5" stroke="#d8d8d8" stroke-width="1"/><text x="770.5" y="502.5" fill="#fff" font-size="8.4" text-anchor="end" font-family="Liberation Sans">20</text><line x1="772.5" y1="461.5" x2="775.5" y2="461.5" stroke="#d8d8d8" stroke-width="1"/><text x="770.5" y="464.5" fill="#fff" font-size="8.4" text-anchor="end" font-family="Liberation Sans">40</text><line x1="772.5" y1="424.5" x2="775.5" y2="424.5" stroke="#d8d8d8" stroke-width="1"/><text x="770.5" y="427.5" fill="#fff" font-size="8.4" text-anchor="end" font-family="Liberation Sans">60</text><line x1="772.5" y1="386.5" x2="775.5" y2="386.5" stroke="#d8d8d8" stroke-width="1"/><text x="770.5" y="389.5" fill="#fff" font-size="8.4" text-anchor="end" font-family="Liberation Sans">80</text><line x1="772.5" y1="349.5" x2="775.5" y2="349.5" stroke="#d8d8d8" stroke-width="1"/><text x="770.5" y="352.5" fill="#fff" font-size="8.4" text-anchor="end" font-family="Liberation Sans">100</text><text x="775.5" y="549.7" fill="#fff" font-size="8.4" text-anchor="middle" font-family="Liberation Sans">0</text><text x="870.5" y="549.7" fill="#fff" font-size="8.4" text-anchor="middle" font-family="Liberation Sans">50</text><text x="965.5" y="549.7" fill="#fff" font-size="8.4" text-anchor="middle" font-family="Liberation Sans">100</text><text x="1060.5" y="549.7" fill="#fff" font-size="8.4" text-anchor="middle" font-family="Liberation Sans">150</text><path d="M775.5 536 L775.5 508.5 L777 508.2 L780 508 L783 508.6 L790 510.6 L797 512.8 L800 514 L806 515.8 L808 517.4 L810 517.4 L812 515 L813.5 512 L815 509" fill="none" stroke="#00e600" stroke-width="1.5"/><path d="M797 510 L799 507.5 L801 509 L803 508 L805 510.5 L806 513 L807 516 L804 518 L801 517 L799 518.5 L797 516 Z" fill="#00e600"/></svg>
<div class="a" style="left:1px;top:64px;width:1px;height:508px;background:#fff"></div>
<div class="a" style="left:1098px;top:64px;width:1px;height:508px;background:#a8a8a8"></div>
<div class="a" style="left:1099px;top:64px;width:1px;height:508px;background:#505050"></div>
<div class="a" style="left:0px;top:572px;width:1100px;height:1px;background:#9a9a9a"></div>
<div class="a" style="left:0px;top:573px;width:1100px;height:1px;background:#7a7a7a"></div>
<div class="a" style="left:0px;top:574px;width:1100px;height:20px;background:#d3d3d3"></div>
<div class="a" style="left:0px;top:574px;width:1100px;height:1px;background:#f4f4f4"></div>
<div class="a" style="left:-1px;top:575px;width:215px;height:19px;border-top:1px solid #bcbcbc;border-left:1px solid #b4b4b4;border-right:1px solid #fff;border-bottom:1px solid #fff"></div>
<div class="a" style="left:216px;top:575px;width:212px;height:19px;border-top:1px solid #bcbcbc;border-left:1px solid #b4b4b4;border-right:1px solid #fff;border-bottom:1px solid #fff"></div>
<div class="a" style="left:430px;top:575px;width:417px;height:19px;border-top:1px solid #bcbcbc;border-left:1px solid #b4b4b4;border-right:1px solid #fff;border-bottom:1px solid #fff"></div>
<div class="a" style="left:849px;top:575px;width:138px;height:19px;border-top:1px solid #bcbcbc;border-left:1px solid #b4b4b4;border-right:1px solid #fff;border-bottom:1px solid #fff"></div>
<div class="a" style="left:988px;top:575px;width:47px;height:19px;border-top:1px solid #bcbcbc;border-left:1px solid #b4b4b4;border-right:1px solid #fff;border-bottom:1px solid #fff"></div>
<div class="a" style="left:1037px;top:576px;width:62px;height:17px;background:#ff0000"></div>
<div class="t" style="left:5px;top:580.33px;font-size:12.6px;color:#000;">Открыт порт COM4</div>
<div class="t" style="left:217px;top:580.42px;font-size:12.5px;color:#000;">Данные получены</div>
<div class="t" style="left:863px;top:580.63px;font-size:12.25px;color:#000;">297мс | 0:0:20,623с</div>
<div class="t" style="left:994px;top:580.33px;font-size:12.6px;color:#000;">K-Line</div>
<div class="t" style="left:1040.5px;top:580.08px;font-size:12.9px;color:#fff;">Допуски</div>
<div class="a" style="left:0px;top:593px;width:1100px;height:1px;background:#f2f2f2"></div>
<div class="a" style="left:0px;top:594px;width:1100px;height:1px;background:#77736f"></div>
<div class="a" style="left:0px;top:595px;width:1100px;height:23px;background:linear-gradient(180deg,#4e4946 0%,#443f3c 40%,#3d3835 100%)"></div>
<div class="a" style="left:0px;top:595px;width:1100px;height:23px;background:linear-gradient(100deg,rgba(0,0,0,0) 0%,rgba(0,0,0,.06) 20%,rgba(255,255,255,.04) 32%,rgba(0,0,0,.04) 45%,rgba(255,255,255,.05) 58%,rgba(0,0,0,.05) 70%,rgba(255,255,255,.03) 85%,rgba(0,0,0,.03) 100%)"></div>
<svg class="a" style="left:5px;top:589px" width="34" height="29" viewBox="0 0 34 29"><defs><linearGradient id="orbg" x1="0" y1="0" x2="0" y2="1"><stop offset="0" stop-color="#6e8fa8"/><stop offset=".45" stop-color="#3f78a6"/><stop offset=".5" stop-color="#0d4f8a"/><stop offset=".8" stop-color="#0f6fb5"/><stop offset="1" stop-color="#19c3f0"/></linearGradient><radialGradient id="orbh" cx="50%" cy="15%" r="55%"><stop offset="0" stop-color="rgba(255,255,255,.55)"/><stop offset="1" stop-color="rgba(255,255,255,0)"/></radialGradient></defs><circle cx="16.5" cy="16.2" r="14.6" fill="url(#orbg)" stroke="#2a3a48" stroke-width="0.8"/><circle cx="16.5" cy="16.2" r="14.6" fill="url(#orbh)"/><path d="M9.5 7.5 Q13 6.2 18 7.2 L16.8 14 Q13 13 8.3 14.3 Z" fill="#e8531c"/><path d="M18.8 8 Q22 9.3 26.5 8 L25.2 15 Q21.5 16.2 17.6 14.8 Z" fill="#8cc43c"/><path d="M8.1 15.2 Q12 14 16.5 15 L15.3 22 Q11.5 21 6.8 22.3 Z" fill="#2a9ae0"/><path d="M17.4 15.8 Q21 17 25 15.8 L23.8 22.8 Q20 24 16.2 22.6 Z" fill="#ffbe1a"/></svg>
<svg class="a" style="left:59px;top:600px" width="12" height="12" viewBox="0 0 12 12"><path d="M0.5 0.8 L6 6 L0.5 11.2 Z" fill="#6a2fd8"/><path d="M11.5 0.8 L6 6 L11.5 11.2 Z" fill="#d2c3f6"/></svg>
<div class="a" style="left:85px;top:595px;width:128px;height:22px;border:1px solid #6c6865;border-radius:3px;background:linear-gradient(170deg,#625e5b 0%,#55514e 40%,#48443f 60%,#3f3b38 100%);box-shadow:0 0 0 1px #2a2624"></div>
<svg class="a" style="left:92px;top:599px" width="14" height="14" viewBox="0 0 14 14"><circle cx="7" cy="7" r="6.5" fill="#db4437"/><path d="M7 7 L1.4 10.3 A6.5 6.5 0 0 1 1.2 3.9 Z" fill="#0f9d58"/><path d="M7 7 L13.5 7 A6.5 6.5 0 0 1 1.4 10.3 Z" fill="#0f9d58"/><path d="M7 7 L13.5 7 A6.5 6.5 0 0 1 7 13.5 L4 8.5 Z" fill="#ffcd40"/><circle cx="7" cy="7" r="3" fill="#fff"/><circle cx="7" cy="7" r="2.3" fill="#4285f4"/></svg>
<div class="t" style="left:108.8px;top:600.66px;font-size:9.5px;color:#f4f4f4;text-shadow:0 0 2px rgba(0,0,0,.8)">Плавают обороты! ...</div>
<svg class="a" style="left:226px;top:599px" width="14" height="15" viewBox="0 0 14 15"><defs><linearGradient id="opg" x1="0" y1="0" x2="0" y2="1"><stop offset="0" stop-color="#ff3a40"/><stop offset="1" stop-color="#c0000c"/></linearGradient></defs><ellipse cx="7" cy="7.5" rx="6.2" ry="6.9" fill="url(#opg)"/><ellipse cx="7.3" cy="7.5" rx="3" ry="5.2" fill="#f0b0b0"/><ellipse cx="7.6" cy="7.5" rx="2.3" ry="4.7" fill="#463f3c"/></svg>
<div class="a" style="left:253px;top:595px;width:127px;height:23px;border:1px solid #e4e4e4;border-radius:2px;background:linear-gradient(100deg,#c4c4c4 0%,#a8a8a8 35%,#8e8e8e 60%,#7a7a7a 100%);box-shadow:0 0 0 1px #3a3633"></div>
<svg class="a" style="left:259px;top:599px" width="16" height="16" viewBox="0 0 16 16"><circle cx="6" cy="6" r="5.6" fill="#262626"/><circle cx="6" cy="5.4" r="2.6" fill="#6a6a6a"/><circle cx="3" cy="6" r=".7" fill="#ccc"/><circle cx="9" cy="6" r=".7" fill="#ccc"/><circle cx="6" cy="2.5" r=".7" fill="#ccc"/><circle cx="6" cy="9.2" r=".7" fill="#ccc"/><circle cx="11" cy="10.4" r="2.6" fill="#f0d000" stroke="#6a5a00" stroke-width=".5"/><circle cx="11" cy="10.4" r="1" fill="#333"/></svg>
<div class="t" style="left:276.4px;top:600.57px;font-size:9.6px;color:#ffffff;text-shadow:0 0 2px rgba(0,0,0,.9),0 0 1px rgba(0,0,0,.6);letter-spacing:-0.15px">OpenDiagFree</div>
<div class="t" style="left:928px;top:599.91px;font-size:9.2px;color:#cccccc;">RU</div>
<svg class="a" style="left:954px;top:605px" width="7" height="4"><path d="M0 4 L3.5 0 L7 4 Z" fill="#e8e8e8"/></svg>
<svg class="a" style="left:969px;top:601px" width="13" height="12" viewBox="0 0 13 12"><path d="M1 4 L3.5 4 L6.5 1 L6.5 11 L3.5 8 L1 8 Z" fill="#f0f0f0"/><path d="M8.3 3.5 Q9.8 6 8.3 8.5 M10.2 2 Q12.6 6 10.2 10" fill="none" stroke="#f0f0f0" stroke-width="1.2"/></svg>
<svg class="a" style="left:989px;top:601px" width="12" height="12" viewBox="0 0 12 12"><rect x="0" y="9" width="2" height="2" fill="#f0f0f0"/><rect x="2.5" y="7" width="2" height="4" fill="#f0f0f0"/><rect x="5" y="5" width="2" height="6" fill="#f0f0f0"/><rect x="7.5" y="3" width="2" height="8" fill="#8a8a8a"/><rect x="10" y="1" width="2" height="10" fill="#8a8a8a"/></svg>
<svg class="a" style="left:1008px;top:599px" width="13" height="15" viewBox="0 0 13 15"><rect x="1.3" y="2.3" width="7" height="11" rx="1" fill="#8a8a8a" stroke="#1a1a1a" stroke-width="1"/><rect x="3" y="1" width="3.5" height="1.5" fill="#ccc"/><path d="M7 5.5 L10 5.5 Q11.3 5.5 11.3 7 L11.3 9 Q11.3 10.5 10 10.5 L7 10.5 Z" fill="#fafafa" stroke="#222" stroke-width=".6"/><path d="M10.5 3 L10.5 5.5 M8.6 3 L8.6 5.5" stroke="#fafafa" stroke-width="1"/><path d="M1.5 7.5 L6.5 13.2 M6.5 7.5 L1.5 13.2" stroke="#ee0000" stroke-width="1.5"/></svg>
<div class="t" style="left:1046.3px;top:602.37px;font-size:8.9px;font-weight:bold;color:#f4f4f4;">14:54</div>
<div class="a" style="left:1089px;top:596px;width:11px;height:22px;background:linear-gradient(90deg,#5a5653,#6e6a67);border:1px solid #8a8683;border-right:none"></div>
</body></html>
